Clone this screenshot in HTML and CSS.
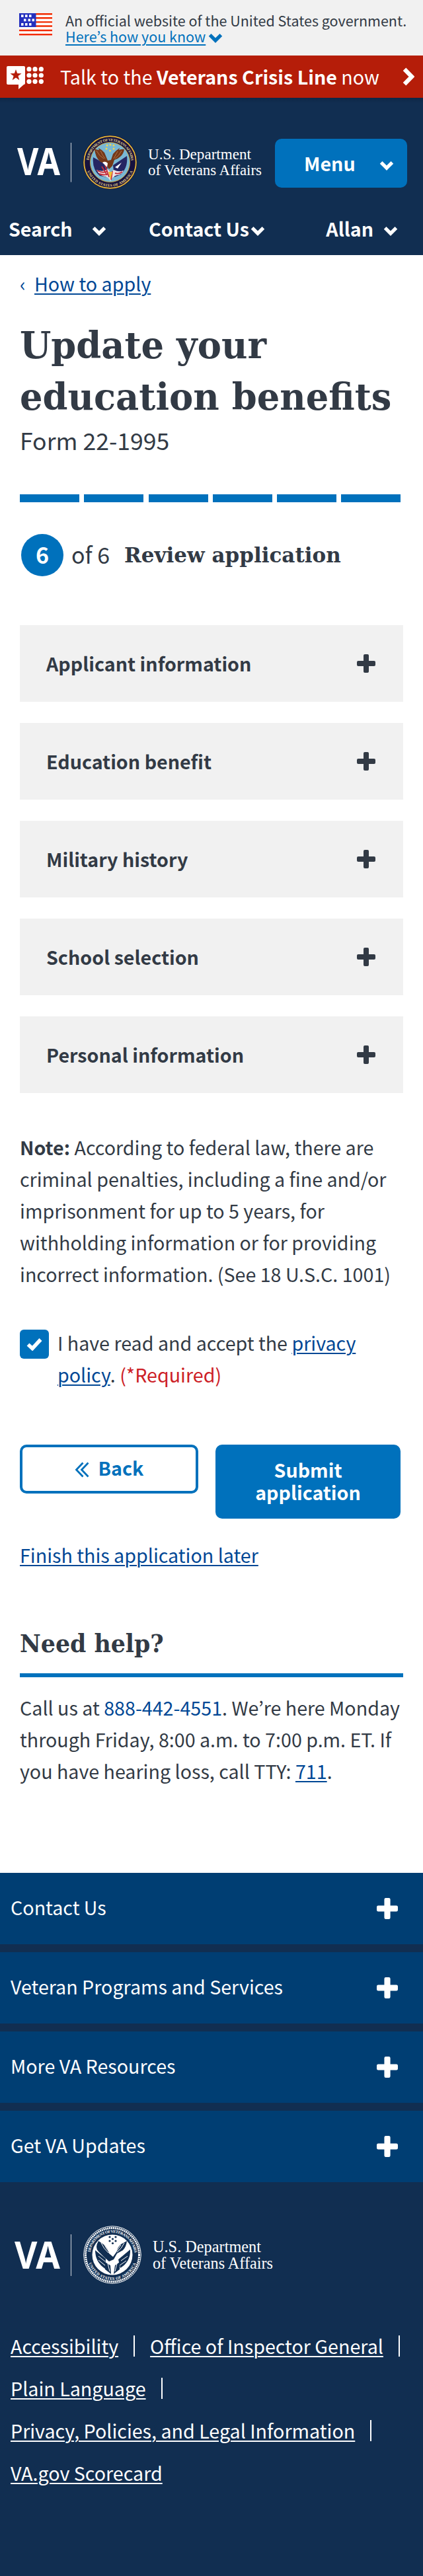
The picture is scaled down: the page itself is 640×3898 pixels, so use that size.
FILE: index.html
```
<!DOCTYPE html>
<html lang="en">
<head>
<meta charset="utf-8">
<title>Update your education benefits | Veterans Affairs</title>
<link rel="stylesheet" href="styles.css">
</head>
<body>
<svg class="defs" width="0" height="0" aria-hidden="true">
  <symbol id="chevron" viewBox="0 0 22 15"><path d="M2.6 2.8 11 11.2 19.4 2.8" fill="none" stroke="currentColor" stroke-width="5.2"/></symbol>
  <symbol id="plus" viewBox="0 0 28 28"><path d="M12 0h4q2 0 2 2v8h8q2 0 2 2v4q0 2-2 2h-8v8q0 2-2 2h-4q-2 0-2-2v-8H2q-2 0-2-2v-4q0-2 2-2h8V2q0-2 2-2z" fill="currentColor"/></symbol>
  <symbol id="star" viewBox="-10 -10 20 20"><path d="M0-10 2.4-3.2 9.5-3.1 3.8 1.2 5.9 8.1 0 4-5.9 8.1-3.8 1.2-9.5-3.1-2.4-3.2z" fill="currentColor"/></symbol>
</svg>

<div class="gov-banner">
  <svg class="flag" viewBox="0 0 50 34">
    <rect width="50" height="34" fill="#fff"/>
    <path d="M0 1.2h50M0 7.3h50M0 13.4h50M0 19.5h50M0 26h50M0 32.2h50" stroke="#f12b00" stroke-width="2.4"/>
    <rect width="25.5" height="21" fill="#2430be"/>
    <path d="M3 4.2h3.5M9 4.2h3.5M15 4.2h3.5M7 10.4h3.5M13.5 10.4H17M19.5 10.4H23M3 16.8h3.5M9 16.8h3.5M15 16.8h3.5" stroke="#fff" stroke-width="3.8"/>
  </svg>
  <div class="gov-text">
    <div>An official website of the United States government.</div>
    <div class="gov-more"><a href="#">Here’s how you know</a><svg class="chev"><use href="#chevron"/></svg></div>
  </div>
</div>

<div class="crisis">
  <svg class="crisis-icon" viewBox="0 0 56 36">
    <path d="M2 0h24q2 0 2 2v24q0 2-2 2l-8 7v-7H2q-2 0-2-2V2q0-2 2-2z" fill="#fff"/>
    <svg x="5" y="5" width="18" height="18" color="#b51d09"><use href="#star"/></svg>
    <g fill="#fff"><circle cx="34" cy="4.7" r="3.6"/><circle cx="43" cy="4.7" r="3.6"/><circle cx="52.3" cy="4.7" r="3.6"/><circle cx="34" cy="14" r="3.6"/><circle cx="43" cy="14" r="3.6"/><circle cx="52.3" cy="14" r="3.6"/><circle cx="34" cy="23.3" r="3.6"/><circle cx="43" cy="23.3" r="3.6"/><circle cx="52.3" cy="23.3" r="3.6"/></g>
  </svg>
  <span class="crisis-text">Talk to the <b>Veterans Crisis Line</b> now</span>
  <svg class="crisis-arrow" viewBox="0 0 18 28"><path d="M3 2.8 14 14 3 25.2" fill="none" stroke="#fff" stroke-width="6.4"/></svg>
</div>

<header class="header">
  <div class="brand-row">
    <svg class="logo" viewBox="26 200 388 92">
      <defs>
        <path id="ringTop" d="M134.5 245.5a32 32 0 0 1 64 0"/>
        <path id="ringBottom" d="M129.5 245.5a37 37 0 0 0 74 0"/>
      </defs>
      <text class="va" x="26" y="265" textLength="65" lengthAdjust="spacingAndGlyphs">VA</text>
      <path d="M107.5 216v59.500" stroke="#b9c1cc" stroke-width="1.2"/>
      <circle cx="166.500" cy="245.500" r="41" fill="#17123f"/>
      <circle cx="166.500" cy="245.500" r="39.300" fill="none" stroke="#e8b936" stroke-width="1.800"/>
      <circle cx="166.500" cy="245.500" r="30" fill="#79b7d4" stroke="#c9a035" stroke-width="1"/>
      <g class="ring-text" fill="#e5d488">
        <text><textPath href="#ringTop" startOffset="3" textLength="95">DEPARTMENT OF VETERANS AFFAIRS</textPath></text>
        <text><textPath href="#ringBottom" startOffset="14" textLength="88">UNITED STATES OF AMERICA</textPath></text>
      </g>
      <g fill="#f4d64c"><circle cx="162" cy="220" r="1.500"/><circle cx="167" cy="219" r="1.500"/><circle cx="172" cy="220" r="1.500"/><circle cx="161" cy="225" r="1.500"/><circle cx="172" cy="225" r="1.500"/><circle cx="166.500" cy="228" r="1.500"/></g>
      <path d="M141 238 163 250 161 268 151 266q-12-10-10-28zM192 236 171 250 173 268 183 264q11-11 9-28z" fill="#252663"/>
      <path d="M146 257q9 4 17-1l5 6 4-5q8 4 15 1-3 7-10 7-7 2-10 9-3-7-9-7-8-2-12-10z" fill="#f0e4e6"/>
      <path d="M147 258q9 5 15 1M150 263q8 3 14 0M174 262q6 2 11-2M154 252l8 13M159 250l6 18M170 259l-2 13" fill="none" stroke="#c42e3c" stroke-width="1.900"/>
      <path d="M143 225q4 2 7 2l-1-3q6 3 9 7l5 12 5-1 3-9q5-6 10-9l-1 3q5-2 8-1-1 7-6 11-4 4-9 5l-3 9-5 5-6-8-7-3q-8-7-9-20z" fill="#743819"/>
      <path d="M146 228q4 8 11 12M152 228q3 7 7 12M184 228q-4 8-10 12M178 229l-6 11" fill="none" stroke="#b37648" stroke-width="1"/>
      <path d="M155 246q4-3 8 1l-1 6q-4-4-7-7z" fill="#fff"/><path d="m174 253 10-7-6 9z" fill="#fff"/>
      <path d="m164 260 3 12 3-12" fill="#eebf34"/>
      <text class="dept" x="224" y="240.500" textLength="156" lengthAdjust="spacingAndGlyphs">U.S. Department</text>
      <text class="dept" x="224" y="264.500" textLength="172" lengthAdjust="spacingAndGlyphs">of Veterans Affairs</text>
    </svg>
    <button class="menu-btn">Menu<svg class="chev"><use href="#chevron"/></svg></button>
  </div>
  <nav class="subnav">
    <a class="nav-search">Search<svg class="chev"><use href="#chevron"/></svg></a>
    <a class="nav-contact">Contact Us<svg class="chev"><use href="#chevron"/></svg></a>
    <a class="nav-user">Allan<svg class="chev"><use href="#chevron"/></svg></a>
  </nav>
</header>

<main class="main">
  <div class="crumb"><span class="crumb-arrow">‹</span><a href="#">How to apply</a></div>
  <h1><span class="slab t1">Update your</span><br><span class="slab t2">education benefits</span></h1>
  <p class="form-no">Form 22-1995</p>
  <div class="progress"><i></i><i></i><i></i><i></i><i></i><i></i></div>
  <div class="step"><span class="step-num">6</span><span class="step-of">of 6</span><h2><span class="slab t3">Review application</span></h2></div>

  <div class="chapters">
    <div class="chapter">Applicant information<svg><use href="#plus"/></svg></div>
    <div class="chapter">Education benefit<svg><use href="#plus"/></svg></div>
    <div class="chapter">Military history<svg><use href="#plus"/></svg></div>
    <div class="chapter">School selection<svg><use href="#plus"/></svg></div>
    <div class="chapter">Personal information<svg><use href="#plus"/></svg></div>
  </div>

  <p class="note"><b>Note:</b> According to federal law, there are<br>criminal penalties, including a fine and/or<br>imprisonment for up to 5 years, for<br>withholding information or for providing<br>incorrect information. (See 18 U.S.C. 1001)</p>

  <div class="consent">
    <span class="box"><svg viewBox="0 0 24 20"><path d="M2.500 10.500 9 16.500 21.500 3" fill="none" stroke="#fff" stroke-width="5.600"/></svg></span>
    <p>I have read and accept the <a href="#">privacy</a><br><a href="#">policy</a>. <span class="required">(*Required)</span></p>
  </div>

  <div class="actions">
    <button class="btn-back"><svg viewBox="0 0 22 24"><path d="M12.500 1.500 2.500 12l10 10.500M20.500 1.500 10.500 12l10 10.500" fill="none" stroke="currentColor" stroke-width="2.800"/></svg>Back</button>
    <button class="btn-submit">Submit<br>application</button>
  </div>
  <p class="later"><a href="#">Finish this application later</a></p>

  <h3 class="help-title"><span class="slab t4">Need help?</span></h3>
  <p class="help">Call us at <a class="plain" href="#">888-442-4551</a>. We’re here Monday<br>through Friday, 8:00 a.m. to 7:00 p.m. ET. If<br>you have hearing loss, call TTY: <a href="#">711</a>.</p>
</main>

<footer class="footer">
  <div class="foot-acc">
    <div><span>Contact Us</span><svg><use href="#plus"/></svg></div>
    <div><span>Veteran Programs and Services</span><svg><use href="#plus"/></svg></div>
    <div><span>More VA Resources</span><svg><use href="#plus"/></svg></div>
    <div><span>Get VA Updates</span><svg><use href="#plus"/></svg></div>
  </div>
  <svg class="foot-logo" viewBox="0 0 420 90">
    <defs>
      <path id="fTop" d="M136.500 45a33.500 33.500 0 0 1 67 0"/>
      <path id="fBottom" d="M132 45a38 38 0 0 0 76 0"/>
    </defs>
    <text class="va" x="22" y="65.500" textLength="69" lengthAdjust="spacingAndGlyphs">VA</text>
    <path d="M107.500 14v63" stroke="#b9c1cc" stroke-width="1.200"/>
    <circle cx="170" cy="45" r="43.300" fill="none" stroke="#fff" stroke-width="1"/>
    <circle cx="170" cy="45" r="40.500" fill="none" stroke="#fff" stroke-width="3" stroke-dasharray="2 .9"/>
    <g class="ring-text foot-ring" fill="#fff">
      <text><textPath href="#fTop" startOffset="4" textLength="98">DEPARTMENT OF VETERANS AFFAIRS</textPath></text>
      <text><textPath href="#fBottom" startOffset="13" textLength="93">UNITED STATES OF AMERICA</textPath></text>
    </g>
    <circle cx="170" cy="45" r="30.500" fill="#fff"/>
    <g fill="#112e51">
      <circle cx="166" cy="18" r="1.600"/><circle cx="170.500" cy="21" r="1.600"/><circle cx="175" cy="18" r="1.600"/><circle cx="166" cy="24" r="1.600"/><circle cx="175" cy="24" r="1.600"/><circle cx="170.500" cy="27.500" r="1.600"/>
      <path d="M149 24q6 4 10 7 4 5 6 12l6 5 5-7q2-8 7-12l9-5q-1 9-6 14l-9 5-5 9-7 3-8-7-8-8q-6-6 0-16z"/>
      <path d="m144 38 16 13-1 15q-15-10-15-28zM197 37q1 18-15 28l-3-13z"/>
      <path d="m159 56 8 5 1 13-9-7zM181 56l-7 5-2 13 9-7z"/>
    </g>
    <path d="M153 27q4 9 11 15M158 30q4 8 7 10M188 27q-4 9-11 14M183 30l-7 10M149 47l10 8M149 53l10 8M193 47l-10 7M191 54l-10 7M163 58l3 12M177 58l-3 12" fill="none" stroke="#fff" stroke-width="1"/>
    <text class="dept" x="231" y="41" textLength="164" lengthAdjust="spacingAndGlyphs">U.S. Department</text>
    <text class="dept" x="231" y="66" textLength="182" lengthAdjust="spacingAndGlyphs">of Veterans Affairs</text>
  </svg>
  <ul class="links">
    <li class="sep"><a href="#">Accessibility</a></li>
    <li class="sep"><a href="#">Office of Inspector General</a></li>
    <li class="sep"><a href="#">Plain Language</a></li>
    <li class="sep"><a href="#">Privacy, Policies, and Legal Information</a></li>
    <li><a href="#">VA.gov Scorecard</a></li>
  </ul>
</footer>
</body>
</html>
```
FILE: styles.css
```
* { box-sizing: border-box; }
body {
  margin: 0;
  background: #fff;
  color: #323a45;
  font: 28.65px/48px "Noto Sans CJK KR", "Noto Sans CJK SC", "Noto Sans", sans-serif;
}
h1, h2, h3, p, ul { margin: 0; padding: 0; }
a { color: #004795; text-decoration: underline; text-decoration-thickness: 2px; text-underline-offset: 3px; }
button { font: inherit; font-weight: 700; border: 0; padding: 0; }
svg { flex: none; display: block; }
.defs { position: absolute; }
.chev { width: 22px; height: 15px; }

.gov-banner { display: flex; height: 84px; padding: 20px 0 0 29px; background: #f1f1f1; font-size: 21.5px; line-height: 24px; }
.flag { width: 50px; height: 34px; margin-right: 20px; }
.gov-text { margin-top: -1px; white-space: nowrap; }
.gov-more { display: flex; align-items: center; }
.gov-more a { color: #0071bc; }
.gov-more .chev { color: #0071bc; margin: 5px 0 0 4px; }

.crisis { display: flex; height: 64px; padding: 0 13px 0 10px; background: #b51d09; color: #fff; }
.crisis-icon { width: 56px; height: 36px; margin: 16px 25px 0 0; }
.crisis-text { flex: 1; line-height: 63px; white-space: nowrap; }
.crisis-arrow { width: 18px; height: 28px; margin-top: 18px; }

.header { height: 238px; background: linear-gradient(#0e2747, #112e51 8px); color: #fff; }
.brand-row { display: flex; justify-content: space-between; height: 170px; padding: 52px 24px 0 26px; }
.logo { width: 388px; height: 92px; overflow: visible; }
.va { font: 700 58px "Noto Sans", sans-serif; fill: #fff; }
.dept { font: 24px "Liberation Serif", serif; fill: #fff; }
.foot-logo .dept { font-size: 25px; }
.ring-text { font: 700 5.6px "Liberation Serif", serif; }
.foot-ring { font-size: 5.9px; }
.menu-btn { display: flex; align-items: center; justify-content: space-between; width: 200px; height: 74px; margin-top: 10px; padding: 0 20px 0 44px; border-radius: 10px; background: #0071bc; color: #fff; line-height: 74px; }
.menu-btn .chev { margin-top: 7px; }
.subnav { display: flex; justify-content: space-between; padding: 4px 38px 0 13px; font-weight: 700; }
.subnav a { display: flex; align-items: center; color: #fff; text-decoration: none; }
.subnav .chev { margin-top: 6px; }
.nav-search .chev { margin-left: 29px; }
.nav-contact { margin-left: 12px; }
.nav-contact .chev { margin-left: 2px; }
.nav-user { margin-left: 40px; }
.nav-user .chev { margin-left: 15px; }

.main { height: 2448px; padding: 19px 30px 0; }
.crumb { display: flex; }
.crumb-arrow { width: 22px; color: #004795; }
.slab { display: inline-block; transform-origin: 0 50%; white-space: nowrap; }
h1, h2, h3 { font-family: "DejaVu Serif", serif; font-weight: 700; }
h1 { margin-top: 30px; font-size: 56px; line-height: 78px; height: 156px; }
.t1, .t2 { transform: scaleX(.97); }
.t4 { transform: scaleX(.915); }
.form-no { margin: 2px 0 57px; font-size: 35.6px; line-height: 50px; }
.progress { display: flex; gap: 7.3px; }
.progress i { width: 90px; height: 12px; background: #0071bc; }
.step { display: flex; align-items: flex-start; height: 64px; margin: 48px 0 74px 2px; font-size: 34px; line-height: 61px; }
.step-num { width: 64px; height: 64px; border-radius: 50%; background: #0071bc; color: #fff; font-weight: 700; text-align: center; }
.step-of { width: 80px; margin-left: 12px; }
.step h2 { font-size: 31px; line-height: 64px; }

.chapters { display: flex; flex-direction: column; gap: 32px; }
.chapter { display: flex; align-items: center; justify-content: space-between; height: 116px; padding: 0 42px 0 40px; background: #f1f1f1; font-weight: 700; }
.chapter svg { width: 28px; height: 28px; }
.note { margin-top: 58px; white-space: nowrap; }
.consent { display: flex; margin-top: 56px; }
.box { display: flex; align-items: center; justify-content: center; width: 44px; height: 44px; margin: 4px 13px 0 0; border-radius: 6px; background: #0071bc; }
.box svg { width: 24px; height: 20px; }
.required { color: #cd2026; }
.actions { display: flex; align-items: flex-start; gap: 26px; margin-top: 82px; }
.btn-back { display: flex; align-items: center; justify-content: center; gap: 14px; width: 270px; height: 74px; padding-bottom: 4px; border: 4px solid #0071bc; border-radius: 10px; background: #fff; color: #0071bc; line-height: 62px; }
.btn-back svg { width: 22px; height: 24px; margin-top: 6px; }
.btn-submit { width: 280px; height: 112px; padding-bottom: 3px; border-radius: 10px; background: #0071bc; color: #fff; line-height: 34px; }
.later { margin-top: 31px; }
.help-title { margin-top: 80px; padding-bottom: 15px; border-bottom: 6px solid #0071bc; font-size: 38px; line-height: 60px; height: 81px; }
.help { margin-top: 22px; white-space: nowrap; }
.help .plain { text-decoration: none; }

.footer { height: 1064px; background: #112e51; color: #fff; }
.footer a { color: #fff; }
.foot-acc { display: flex; flex-direction: column; gap: 12px; }
.foot-acc div { display: flex; align-items: center; justify-content: space-between; height: 108px; padding: 0 38px 0 16px; background: #003e73; }
.foot-acc span { padding-bottom: 5px; }
.foot-acc svg { width: 32px; height: 32px; }
.foot-logo { width: 420px; height: 90px; margin-top: 65px; overflow: visible; }
.links { display: flex; flex-wrap: wrap; margin-top: 61px; padding-left: 16px; list-style: none; line-height: 64px; white-space: nowrap; }
.links li { display: flex; align-items: center; }
.sep::after { content: ""; width: 2px; height: 32px; margin: 0 23px; background: #fff; }
```
